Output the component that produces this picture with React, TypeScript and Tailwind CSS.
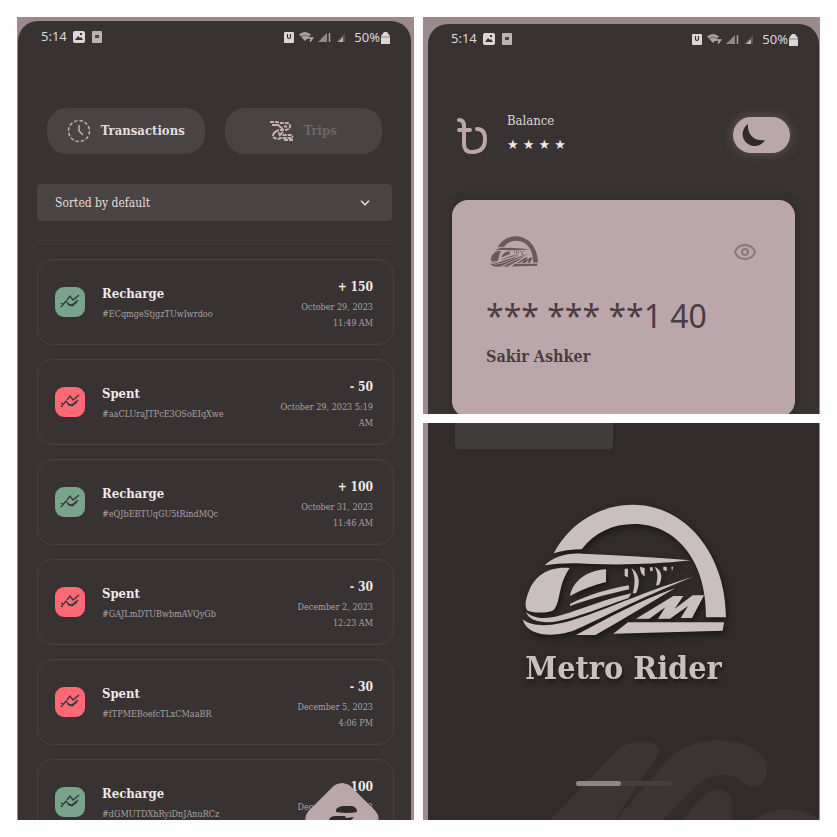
import React from "react";
import { ChevronDown, Eye } from "lucide-react";

const serif = "font-['DejaVu_Serif_Condensed','DejaVu_Serif',serif]";

type Entry = { kind: "Recharge" | "Spent"; id: string; amount: string; day: string; time?: string };

const entries: Entry[] = [
  { kind: "Recharge", id: "#ECqmgeStjgzTUwIwrdoo", amount: "+ 150", day: "October 29, 2023", time: "11:49 AM" },
  { kind: "Spent", id: "#aaCLUraJTPcE3OSoEIqXwe", amount: "- 50", day: "October 29, 2023 5:19", time: "AM" },
  { kind: "Recharge", id: "#eQJbEBTUqGU5tRindMQc", amount: "+ 100", day: "October 31, 2023", time: "11:46 AM" },
  { kind: "Spent", id: "#GAJLmDTUBwbmAVQyGb", amount: "- 30", day: "December 2, 2023", time: "12:23 AM" },
  { kind: "Spent", id: "#fTPMEBoefcTLxCMaaBR", amount: "- 30", day: "December 5, 2023", time: "4:06 PM" },
  { kind: "Recharge", id: "#dGMUTDXhRyiDnJAnuRCz", amount: "+ 100", day: "December 6, 2023" },
];

function StatusBar() {
  return (
    <div className="flex h-6 items-center justify-between pl-[23px] pr-5 font-['Noto_Sans',sans-serif] text-[13px] text-[#ddd6d6]">
      <div className="flex items-center gap-1.5">
        <span>5:14</span>
        <svg width="12" height="12" viewBox="0 0 12 12" aria-hidden="true">
          <rect width="12" height="12" rx="2" fill="#ddd6d6" />
          <path d="M2 9 5 5l2 2 1-1 2 3z" fill="#393233" />
          <rect x="7" y="2" width="2" height="2" fill="#393233" />
        </svg>
        <svg width="12" height="12" viewBox="0 0 12 12" aria-hidden="true">
          <rect x="1" width="10" height="12" rx="1" fill="#bbb3b3" />
          <path d="M4 4h4v3H4z" fill="#4a4344" />
        </svg>
      </div>
      <div className="flex items-center gap-1">
        <svg width="12" height="12" viewBox="0 0 12 12" aria-hidden="true">
          <rect x="1" y="1" width="10" height="11" rx="1" fill="#ddd6d6" />
          <path d="M4.500 3v3a1.500 1.500 0 0 0 3 0V3" fill="none" stroke="#393233" strokeWidth="1.200" />
        </svg>
        <svg width="15" height="12" viewBox="0 0 15 12" aria-hidden="true">
          <path d="M0 3.500Q6-1.500 12 3.500L6 10z" fill="#aaa2a2" />
          <path d="M2 5.500q4-3 8 0" fill="none" stroke="#6b6364" />
          <path d="M8 7h5.500l-2.500 3.500" fill="none" stroke="#bbb3b3" strokeWidth="1.500" />
        </svg>
        <svg width="14" height="12" viewBox="0 0 14 12" aria-hidden="true">
          <path d="M0 11 9 2v9z" fill="#8f8788" />
          <path d="M11.500 2v9" stroke="#aaa2a2" strokeWidth="1.500" />
        </svg>
        <svg width="10" height="12" viewBox="0 0 10 12" aria-hidden="true">
          <path d="M0 11 9 2v9z" fill="#5b5354" />
          <path d="M2 11 7 6v5z" fill="#bbb3b3" />
        </svg>
        <span className="pl-1 leading-none">50%</span>
        <svg className="-ml-1" width="11" height="13" viewBox="0 0 11 13" aria-hidden="true">
          <path d="M4 1h3l3 4v8H1V5z" fill="#ddd6d6" />
          <path d="M1 6h9" stroke="#8b8384" />
        </svg>
      </div>
    </div>
  );
}

function TrainLogo({ className, color }: { className: string; color: string }) {
  return (
    <svg className={className} viewBox="60 72 612 396" fill={color} aria-hidden="true">
      <path d="M155 220C205 125 300 74 392 74c160 0 280 150 280 338h-60c2-176-95-280-215-280-65 0-120 26-158 76-30 0-58 4-84 12z" />
      <path d="M128 256c26-26 66-38 112-35 110 5 220 10 326 20-110 12-200 14-296 11-62-4-102-2-142 4z" />
      <path d="M203 264c-60-6-104 22-122 68-14 34-12 52-4 60 20 8 62 8 78-2 22-24 12-74 48-126z" />
      <path d="M204 348c8-42 46-76 108-80v38c-40 10-76 24-108 42z" />
      <path d="M204 372c56-28 112-44 176-56l2 12c-62 14-124 30-178 50z" />
      <path d="M72 396c26 22 62 22 104 10 70-20 130-48 212-66l-8 14c-84 28-144 56-214 70-44 8-86-2-94-28z" />
      <path d="M62 418c24 20 70 22 112 12 100-22 226-88 400-140-148 58-250 112-350 158-48 22-146 30-162-30z" />
      <path d="M222 465c90-48 180-100 300-142-70 40-144 86-242 142z" />
      <path d="m334 461 44-34h288l-4 25z" />
      <path d="m402 416 112-68h30l-26 38 54-40h34l-36 68h-34l22-36-54 38h-36l22-34-48 34z" />
      <path d="M368 266h10v26l-10-4zm20-2c22 14 30 44 14 76h-10c8-28 8-52-4-76zm26-4 14 4v24c-8-2-14-14-14-28zm30 2h8v12l-8-2zm14-2c22 10 26 34 12 56h-8c6-22 6-38-4-56zm26 0h10v14l-10-4zm24 0h6l-4 14z" />
    </svg>
  );
}

function TransactionCard({ entry }: { entry: Entry }) {
  const tone = entry.kind === "Spent" ? "bg-[#ff6875]" : "bg-[#78a48b]";
  return (
    <li className="flex h-[86px] items-center rounded-2xl border border-[#484142] pl-[17px] pr-5">
      <span className={`flex size-[30px] shrink-0 items-center justify-center rounded-[9px] ${tone}`}>
        <svg width="20" height="16" viewBox="0 0 20 16" fill="none" stroke="#393839" strokeWidth="1.300" aria-hidden="true">
          <path d="m1 13 5-6 3 4h3l6-5" />
          <path d="m1 9 2 1M7 6l3-4 3 4 6-5" />
          <path d="m9 10 3 2 5-4" />
        </svg>
      </span>
      <div className="ml-[17px] min-w-0 flex-1 pt-[3px]">
        <h3 className="text-[13px] font-bold leading-5 text-[#eee8e8]">{entry.kind}</h3>
        <p className="whitespace-nowrap text-[9px] leading-5 text-[#aaa2a3]">{entry.id}</p>
      </div>
      <div className="shrink-0 pt-1 text-right">
        <p className="text-[12px] font-bold leading-5 text-[#eee8e8]">{entry.amount}</p>
        <p className="pt-0.5 text-[9px] leading-4 text-[#aaa2a3]">
          {entry.day}
          <br />
          {entry.time ?? "\u00a0"}
        </p>
      </div>
    </li>
  );
}

function HistoryScreen() {
  return (
    <section className="relative row-span-2 aspect-[397/803] overflow-hidden bg-[#9b898c] pl-px pr-[3px] pt-1">
      <div className="h-full rounded-t-[20px] bg-[#383233] pt-1">
        <StatusBar />
        <div className="mt-[59px] grid grid-cols-2 gap-5 px-[29px]">
          <button className="flex h-[46px] items-center justify-center gap-2.5 rounded-[20px] bg-[#494443] text-[13px] font-bold text-[#e4dddd]">
            <svg width="24" height="24" viewBox="0 0 24 24" fill="none" stroke="#c5adb1" strokeWidth="1.500" aria-hidden="true">
              <circle cx="12" cy="12" r="10.500" strokeDasharray="3.500 2" />
              <path d="M12 6v6l4 4" />
            </svg>
            Transactions
          </button>
          <button className="flex h-[46px] items-center justify-center gap-2.5 rounded-[20px] bg-[#494443] text-[13px] font-bold text-[#6d6666]">
            <svg width="24" height="22" viewBox="0 0 24 22" fill="none" stroke="#c5adb1" strokeWidth="2" aria-hidden="true">
              <path d="M0 2h7l3 1h7q4 1 3 4t-5 3H9" strokeDasharray="4 1" />
              <path d="M2 5h6l5 4M14 6l3 1M9 10q-6 2-6 6M13 12l-4 4" />
              <path d="M3 17q4 3 8 1h12M8 13l5 2h8l2 2M14 20h9" strokeDasharray="4 1" />
            </svg>
            Trips
          </button>
        </div>
        <div className="relative mx-[19px] mt-[30px]">
          <select
            aria-label="Sort order"
            className="h-[37px] w-full appearance-none rounded-[4px] bg-[#494443] px-[18px] text-[12px] font-medium text-[#e4dddd]"
          >
            <option>Sorted by default</option>
          </select>
          <ChevronDown className="pointer-events-none absolute right-5 top-3 size-3.5 text-[#ddd6d6]" strokeWidth={3} />
        </div>
        <hr className="mx-[19px] mt-[19px] border-[#3e3738]" />
        <ul className="mt-[18px] flex flex-col gap-3.5 pl-[19px] pr-[17px]">
          {entries.map((e) => (
            <TransactionCard key={e.id} entry={e} />
          ))}
        </ul>
      </div>
      <button
        aria-label="Metro"
        className="absolute -bottom-[30px] right-[42px] flex size-[60px] rotate-45 items-center justify-center rounded-[14px] bg-[#bba7ab]"
      >
        <svg className="-rotate-45" width="36" height="36" viewBox="0 0 36 36" aria-hidden="true">
          <path d="M12 8q2-4 8-4h8q5 1 5 6-10 2-21 0z" fill="#2f292a" />
          <path d="M5 19q0-5 7-5h9l1 2 8-1-3 3v10H7z" fill="#2f292a" />
        </svg>
      </button>
    </section>
  );
}

function BalanceScreen() {
  return (
    <section className="aspect-square overflow-hidden bg-[#9b898c] pl-[5px] pr-px pt-[7px]">
      <div className="h-full rounded-t-[20px] bg-[#383233] pt-[3px]">
        <StatusBar />
        <div className="mt-[60px] flex items-center px-[29px]">
          <svg width="30" height="37" viewBox="0 0 30 37" fill="none" stroke="#bba7ab" strokeWidth="4" strokeLinecap="round" aria-hidden="true">
            <path d="M2 3q5 0 5 6v18q0 8 8 8 13 0 13-13 0-10-8-10M2 13h11" />
          </svg>
          <div className="ml-5 flex-1">
            <p className="text-[13px] leading-5 text-[#ddd6d6]">Balance</p>
            <p className="font-['DejaVu_Sans',sans-serif] text-[13px] leading-7 text-[#eee8e8]">★ ★ ★ ★</p>
          </div>
          <label className="flex h-9 w-[57px] cursor-pointer items-center rounded-full bg-[#bba7ab] pl-2 shadow-[0_0_12px_#66585b]">
            <input type="checkbox" defaultChecked aria-label="Dark theme" className="sr-only" />
            <svg width="25" height="25" viewBox="0 0 25 25" aria-hidden="true">
              <path d="M7 1a12 12 0 1 0 17 16C14 19 6 12 7 1z" fill="#302a2b" />
            </svg>
          </label>
        </div>
        <article className="mx-6 mt-[41px] h-[217px] rounded-2xl bg-[#bba7ab] px-[34px] pt-9 shadow-[0_0_8px_#2e2829]">
          <div className="flex items-center justify-between pr-1">
            <TrainLogo className="ml-1 h-[31px] w-[48px]" color="#69595e" />
            <button aria-label="Show card number" className="text-[#8b777d]">
              <Eye className="size-6" strokeWidth={2} />
            </button>
          </div>
          <p className="mt-6 whitespace-nowrap font-['Noto_Sans',sans-serif] text-[32px] leading-[50px] text-[#4b3d41]">
            *** *** **1 40
          </p>
          <p className="mt-1 text-[16px] font-bold leading-6 text-[#4b3d41]">Sakir Ashker</p>
        </article>
      </div>
    </section>
  );
}

function SplashScreen() {
  return (
    <section className="aspect-square overflow-hidden bg-[#9b898c] pl-[5px] pr-px">
      <div className="relative h-full bg-[#312c2b]">
        <svg className="absolute bottom-0 right-0 h-[80px] w-[272px]" viewBox="384 150 816 240" fill="#3b3433" aria-hidden="true">
          <path d="M390 392 600 176q50-34 95-18 35 10 18 40L585 392z" />
          <path d="M590 392 750 204q70-60 170-52 90 8 122 62 10 70-40 78-22-4-40-26-66-32-130 22L730 392z" />
          <path d="m788 392 72-82q40-24 66 0 24 26 10 82z" />
          <path d="M1000 392q90-66 200-6v6z" />
        </svg>
        <div className="relative flex flex-col items-center">
          <div className="ml-[27px] h-[26px] w-[158px] self-start rounded-b-[4px] bg-[#413d3c]" />
          <TrainLogo className="mt-[55px] h-[132px] w-[204px] drop-shadow-[2px_3px_3px_#1a1616]" color="#c9bfc1" />
          <h1 className="mt-2 text-[32px] font-bold leading-[48px] text-[#c9bfc1] drop-shadow-[1px_3px_2px_#1a1616]">Metro Rider</h1>
          <div role="progressbar" aria-label="Loading" aria-valuenow={47} className="mt-[89px] h-[5px] w-24 rounded-full bg-[#453e3e]">
            <div className="h-full w-[47%] rounded-full bg-[#8f8587]" />
          </div>
        </div>
      </div>
    </section>
  );
}

export default function App() {
  return (
    <main className={`grid min-h-screen grid-cols-2 content-start gap-[9px] bg-[#fdfdfd] p-[17px] ${serif}`}>
      <HistoryScreen />
      <BalanceScreen />
      <SplashScreen />
    </main>
  );
}
